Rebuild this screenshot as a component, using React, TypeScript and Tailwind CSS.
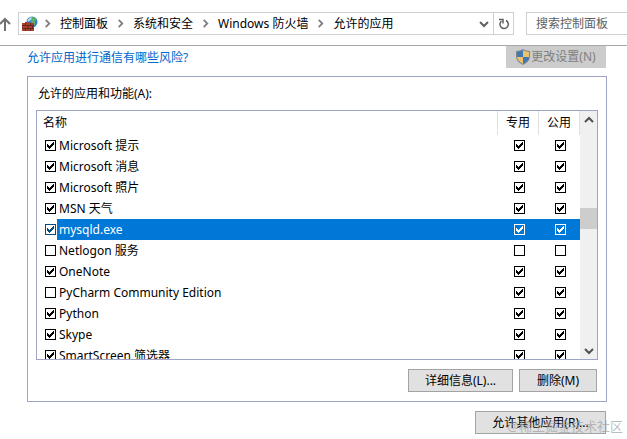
import { useState } from "react";

const CRUMBS = ["控制面板", "系统和安全", "Windows 防火墙", "允许的应用"];

type AppRule = {
	name: string;
	enabled: boolean;
	home: boolean;
	open: boolean;
};

const RULES: AppRule[] = [
	{ name: "Microsoft 提示", enabled: true, home: true, open: true },
	{ name: "Microsoft 消息", enabled: true, home: true, open: true },
	{ name: "Microsoft 照片", enabled: true, home: true, open: true },
	{ name: "MSN 天气", enabled: true, home: true, open: true },
	{ name: "mysqld.exe", enabled: true, home: true, open: true },
	{ name: "Netlogon 服务", enabled: false, home: false, open: false },
	{ name: "OneNote", enabled: true, home: true, open: true },
	{ name: "PyCharm Community Edition", enabled: false, home: true, open: true },
	{ name: "Python", enabled: true, home: true, open: true },
	{ name: "Skype", enabled: true, home: true, open: true },
	{ name: "SmartScreen 筛选器", enabled: true, home: true, open: true },
];

function Chevron({ className }: { className: string }) {
	return (
		<svg viewBox="0 0 10 10" className={className} aria-hidden="true">
			<path d="M1 3l4 4 4-4" fill="none" stroke="currentColor" strokeWidth="2" />
		</svg>
	);
}

function FirewallIcon() {
	return (
		<svg viewBox="0 0 16 16" className="size-4 shrink-0" aria-hidden="true">
			<circle cx="10" cy="6" r="5.5" fill="#2f7fc8" />
			<path d="M10 1q4 0 4.500 3l-2 1 1 3-2 2-2-3-1-3z" fill="#5fae62" />
			<path d="M5.500 4q1.500-3 4.500-3l-1 3-3 2z" fill="#a9dbf2" />
			<path d="M0 7h3V6h4v1h5v8H0z" fill="#a8402f" />
			<path
				d="M0 9.500h12M0 12.500h12M3.500 7v2.500M8.500 7v2.500M6 9.500v3M10.500 9.500v3M3.500 12.500V15M8.500 12.500V15"
				stroke="#5c2219"
				strokeWidth="0.800"
			/>
		</svg>
	);
}

function ShieldIcon() {
	return (
		<svg viewBox="0 0 14 16" className="h-4 w-[14px] shrink-0" aria-hidden="true">
			<path d="M7 0Q4 2 0 2v5q0 6 7 9 7-3 7-9V2Q10 2 7 0z" fill="#7f8890" />
			<path d="M7 1.300Q4 3 1 3v5h6z" fill="#3f78b5" />
			<path d="M7 1.300Q10 3 13 3v5H7z" fill="#ecc367" />
			<path d="M1 8h6v6.800Q1.500 12 1 8z" fill="#ecc367" />
			<path d="M13 8H7v6.800Q12.500 12 13 8z" fill="#3f78b5" />
		</svg>
	);
}

function Check({
	label,
	checked,
	tone = "border-black bg-white text-black",
	onChange,
}: {
	label: string;
	checked: boolean;
	tone?: string;
	onChange: () => void;
}) {
	return (
		<span className={`grid size-[11px] shrink-0 ${tone}`}>
			<input
				type="checkbox"
				aria-label={label}
				checked={checked}
				onChange={onChange}
				className="col-start-1 row-start-1 size-[11px] appearance-none border border-current"
			/>
			{checked && (
				<svg
					viewBox="0 0 11 11"
					shapeRendering="crispEdges"
					className="pointer-events-none col-start-1 row-start-1 size-[11px]"
					aria-hidden="true"
				>
					<path
						d="M2 4h1v3h-1zM3 5h1v3h-1zM4 6h1v3h-1zM5 5h1v3h-1zM6 4h1v3h-1zM7 3h1v3h-1zM8 2h1v3h-1z"
						fill="currentColor"
					/>
				</svg>
			)}
		</span>
	);
}

const BUTTON =
	"flex items-center justify-center h-[23px] border border-[#a3a3a3] bg-[#e1e1e1]";

export default function App() {
	const [rules, setRules] = useState(RULES);
	const [selected, setSelected] = useState("mysqld.exe");

	const toggle = (name: string, key: "enabled" | "home" | "open") =>
		setRules((all) =>
			all.map((rule) =>
				rule.name === name ? { ...rule, [key]: !rule[key] } : rule,
			),
		);

	return (
		<div className="overflow-hidden bg-white font-['Noto_Sans','Noto_Sans_CJK_SC',sans-serif] text-xs text-black">
			<header className="flex h-[46px] items-center border-b border-[#a8a8a8] pt-[2px]">
				<button type="button" aria-label="向上" className="-ml-[3px] mr-[5px] text-[#707070]">
					<svg viewBox="0 0 16 16" className="size-4" aria-hidden="true">
						<path d="M8 15V3M3 8l5-5 5 5" fill="none" stroke="currentColor" strokeWidth="2" />
					</svg>
				</button>
				<div className="flex h-[23px] min-w-0 flex-1 items-center border border-[#d0d0d0] pl-[3px]">
					<FirewallIcon />
					<nav className="-ml-[3px] flex flex-1 items-center whitespace-nowrap">
						{CRUMBS.map((crumb) => (
							<span key={crumb} className="flex items-center">
								<Chevron className="mx-2 size-[9px] -rotate-90 text-[#808080]" />
								<a href="#">{crumb}</a>
							</span>
						))}
					</nav>
					<button type="button" aria-label="以前的位置" className="px-1 text-[#606060]">
						<Chevron className="size-[10px]" />
					</button>
					<button
						type="button"
						aria-label="刷新"
						className="flex h-full w-5 items-center justify-center border-l border-[#d0d0d0] text-[#606060]"
					>
						<svg viewBox="0 0 12 12" className="size-3" aria-hidden="true">
							<path d="M8 2.500a4.200 4.200 0 1 1-4.500.500M1 1.500h4v4" fill="none" stroke="currentColor" strokeWidth="1.500" />
						</svg>
					</button>
				</div>
				<input
					type="search"
					aria-label="搜索控制面板"
					placeholder="搜索控制面板"
					className="ml-3 h-[23px] w-[101px] border border-r-0 border-[#d0d0d0] pl-[9px] placeholder:text-[#606060]"
				/>
			</header>

			<main className="pb-1 pl-[27px] pr-5">
				<div className="flex items-start justify-between pr-px">
					<a href="#" className="pt-1 text-[#0066cc]">
						允许应用进行通信有哪些风险?
					</a>
					<button
						type="button"
						disabled
						className="flex h-[22px] w-[100px] items-center justify-center gap-px bg-[#cccccc] text-[#808080]"
					>
						<ShieldIcon />
						更改设置(N)
					</button>
				</div>

				<section className="mt-2 border border-[#a0a4c4] px-2 pb-[9px] pt-2">
					<h2 className="pl-[2px] leading-[18px]">允许的应用和功能(A):</h2>
					<div className="mt-[7px] flex h-[250px] border border-[#a0a4c4]">
						<div className="min-w-0 flex-1 overflow-hidden">
							<table className="w-full table-fixed border-collapse">
								<thead>
									<tr className="h-6">
										<th className="pl-[6px] text-left font-normal">名称</th>
										<th className="w-[41px] border-l border-[#e0e0e0] font-normal">专用</th>
										<th className="w-[41px] border-x border-[#e0e0e0] font-normal">公用</th>
									</tr>
								</thead>
								<tbody>
									{rules.map((rule) => {
										const active = rule.name === selected;
										return (
											<tr key={rule.name} className="h-[21px]" onClick={() => setSelected(rule.name)}>
												<td className="p-0">
													<div className="flex h-[21px] items-center pl-2">
														<Check
															label={rule.name}
															checked={rule.enabled}
															tone={active ? "bg-white text-[#004a80]" : undefined}
															onChange={() => toggle(rule.name, "enabled")}
														/>
														<span
															className={`ml-px flex h-full flex-1 items-center pl-[2px] ${active ? "bg-[#0078d7] text-white" : ""}`}
														>
															{rule.name}
														</span>
													</div>
												</td>
												{(["home", "open"] as const).map((key) => (
													<td key={key} className={`p-0 ${active ? "bg-[#0078d7]" : ""}`}>
														<div className="flex justify-center pl-[2px]">
															<Check
																label={`${rule.name} ${key === "home" ? "专用" : "公用"}`}
																checked={rule[key]}
																tone={active ? "text-white" : undefined}
																onChange={() => toggle(rule.name, key)}
															/>
														</div>
													</td>
												))}
											</tr>
										);
									})}
								</tbody>
							</table>
						</div>
						<div className="flex w-[17px] flex-col items-center bg-[#f0f0f0] text-[#505050]">
							<button type="button" aria-label="向上滚动" className="flex h-[17px] items-center">
								<Chevron className="size-[10px] rotate-180" />
							</button>
							<div className="mt-20 h-[21px] w-full bg-[#cdcdcd]" />
							<button type="button" aria-label="向下滚动" className="mt-auto flex h-[17px] items-center">
								<Chevron className="size-[10px]" />
							</button>
						</div>
					</div>
					<div className="mt-[9px] flex justify-end gap-[6px] pr-px">
						<button type="button" className={`${BUTTON} w-[105px]`}>
							详细信息(L)...
						</button>
						<button type="button" className={`${BUTTON} w-[78px]`}>
							删除(M)
						</button>
					</div>
				</section>

				<div className="relative mt-[9px] flex justify-end pr-px">
					<button type="button" className={`${BUTTON} w-[131px]`}>
						允许其他应用(R)...
					</button>
					<span className="pointer-events-none absolute -right-4 top-[5px] text-[13px] leading-5 text-[#a0a0a0]/70">
						@稀土掘金技术社区
					</span>
				</div>
			</main>
		</div>
	);
}
